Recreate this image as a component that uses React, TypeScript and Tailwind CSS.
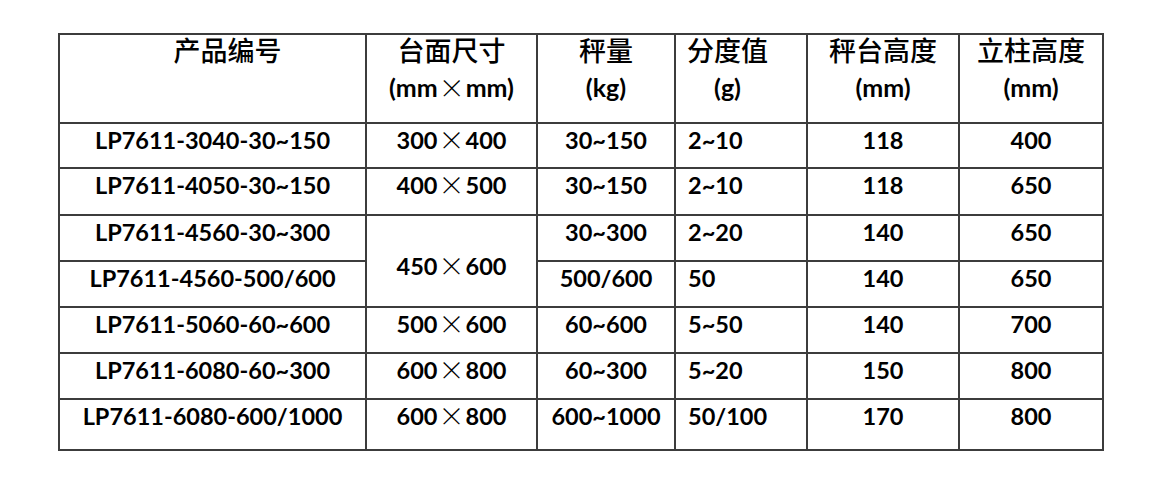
import React from "react";

const X = () => (
  <span
    className="font-light text-[26px] leading-none mx-[1px] align-[-1px]"
    style={{ fontFamily: '"Noto Sans CJK SC", sans-serif' }}
  >
    ×
  </span>
);

type Row = {
  id: string;
  size?: [string, string];
  span?: number;
  hide?: boolean;
  cap: string;
  div: string;
  h1: string;
  h2: string;
  h: string;
};

const rows: Row[] = [
  { id: "LP7611-3040-30~150", size: ["300", "400"], cap: "30~150", div: "2~10", h1: "118", h2: "400", h: "h-[45px]" },
  { id: "LP7611-4050-30~150", size: ["400", "500"], cap: "30~150", div: "2~10", h1: "118", h2: "650", h: "h-[47px]" },
  { id: "LP7611-4560-30~300", size: ["450", "600"], span: 2, cap: "30~300", div: "2~20", h1: "140", h2: "650", h: "h-[46px]" },
  { id: "LP7611-4560-500/600", hide: true, cap: "500/600", div: "50", h1: "140", h2: "650", h: "h-[46px]" },
  { id: "LP7611-5060-60~600", size: ["500", "600"], cap: "60~600", div: "5~50", h1: "140", h2: "700", h: "h-[46px]" },
  { id: "LP7611-6080-60~300", size: ["600", "800"], cap: "60~300", div: "5~20", h1: "150", h2: "800", h: "h-[46px]" },
  { id: "LP7611-6080-600/1000", size: ["600", "800"], cap: "600~1000", div: "50/100", h1: "170", h2: "800", h: "h-[51px]" },
];

const td = "border-2 border-[#3c3c3c] align-top p-0 pt-0 leading-[32px]";
const th = "border-2 border-[#3c3c3c] align-top p-0 font-bold";

const H1 = ({ children }: { children: React.ReactNode }) => (
  <div className="text-[27px] leading-[32px] font-medium">{children}</div>
);
const H2 = ({ children }: { children: React.ReactNode }) => (
  <div className="text-[25px] leading-[40px]">{children}</div>
);

export default function App() {
  return (
    <div
      className="w-[1152px] h-[500px] bg-white pt-[33px] pl-[58px] text-black"
      style={{ fontFamily: 'Lato, "Noto Sans CJK SC", sans-serif' }}
    >
      <table className="table-fixed border-collapse w-[1044px] text-[23.5px] font-bold">
        <colgroup>
          <col className="w-[307px]" />
          <col className="w-[171px]" />
          <col className="w-[138px]" />
          <col className="w-[132px]" />
          <col className="w-[152px]" />
          <col className="w-[144px]" />
        </colgroup>
        <thead>
          <tr className="h-[89px]">
            <th className={`${th} text-center pl-[30px]`}>
              <H1>产品编号</H1>
            </th>
            <th className={`${th} text-center`}>
              <H1>台面尺寸</H1>
              <H2>
                (mm<X />mm)
              </H2>
            </th>
            <th className={`${th} text-center`}>
              <H1>秤量</H1>
              <H2>(kg)</H2>
            </th>
            <th className={`${th} text-left pl-[11px]`}>
              <div className="inline-flex flex-col items-center">
                <H1>分度值</H1>
                <H2>(g)</H2>
              </div>
            </th>
            <th className={`${th} text-center`}>
              <H1>秤台高度</H1>
              <H2>(mm)</H2>
            </th>
            <th className={`${th} text-center`}>
              <H1>立柱高度</H1>
              <H2>(mm)</H2>
            </th>
          </tr>
        </thead>
        <tbody>
          {rows.map((r) => (
            <tr key={r.id} className={r.h}>
              <td className={`${td} text-center`}>{r.id}</td>
              {!r.hide && r.size && (
                <td className={`${td} text-center ${r.span ? "pt-[34px]" : ""}`} rowSpan={r.span ?? 1}>
                  {r.size[0]}
                  <X />
                  {r.size[1]}
                </td>
              )}
              <td className={`${td} text-center`}>{r.cap}</td>
              <td className={`${td} text-left pl-[12px]`}>{r.div}</td>
              <td className={`${td} text-center`}>{r.h1}</td>
              <td className={`${td} text-center`}>{r.h2}</td>
            </tr>
          ))}
        </tbody>
      </table>
    </div>
  );
}
